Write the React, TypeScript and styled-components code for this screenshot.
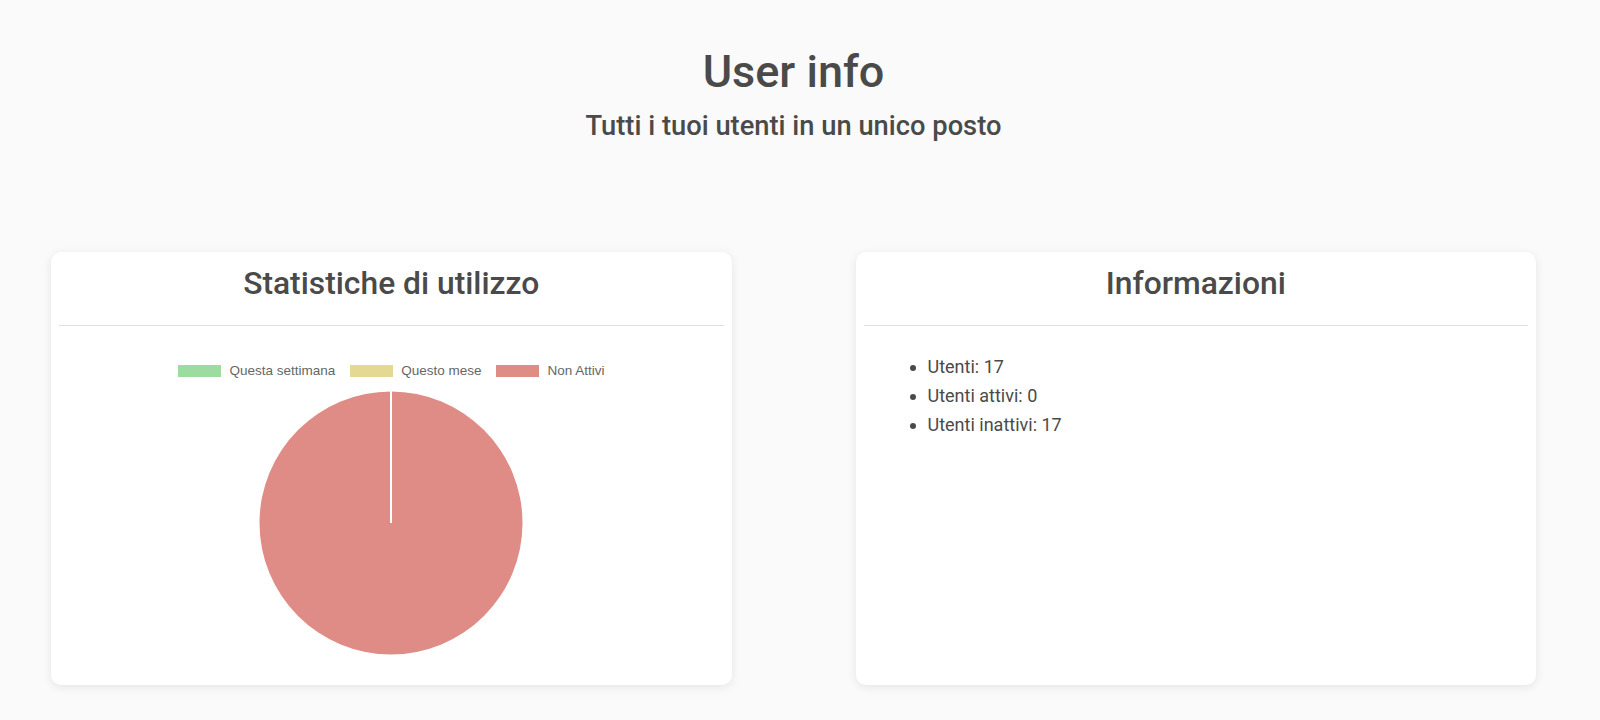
import React from "react";
import styled, { createGlobalStyle } from "styled-components";

const COLORS = {
  page: "#fafafa",
  text: "#4a4a4a",
  legendText: "#666666",
  divider: "#e0e0e0",
  green: "#9ddca0",
  yellow: "#e4d993",
  red: "#e08c86",
};

const GlobalStyle = createGlobalStyle`
  html, body {
    margin: 0;
    padding: 0;
    background-color: ${COLORS.page};
    font-family: Roboto, "Liberation Sans", Arial, sans-serif;
    color: ${COLORS.text};
  }
  * {
    box-sizing: border-box;
  }
`;

const S = {
  // the reference leaves a 13px gutter on the right (scrollbar lane)
  Page: styled.div`
    min-height: 720px;
    display: flex;
    flex-direction: column;
    padding-right: 13px;
  `,
  Header: styled.header`
    display: flex;
    flex-direction: column;
    align-items: center;
    padding-top: 45px;
  `,
  Title: styled.h1`
    margin: 0;
    font-size: 45px;
    line-height: 1.2;
    font-weight: 500;
  `,
  Subtitle: styled.h2`
    margin: 11px 0 0;
    font-size: 27.3px;
    line-height: 1.2;
    font-weight: 500;
  `,
  Grid: styled.main`
    display: grid;
    grid-template-columns: 1fr 1fr;
    column-gap: 124px;
    padding: 109px 51px 0;
  `,
  Card: styled.section`
    display: flex;
    flex-direction: column;
    height: 433px;
    padding: 8px;
    background-color: #ffffff;
    border-radius: 10px;
    box-shadow: 0 2px 10px rgba(0, 0, 0, 0.09);
  `,
  CardHeader: styled.div`
    padding: 4px 0 23px;
    border-bottom: 1px solid ${COLORS.divider};
    text-align: center;
  `,
  CardTitle: styled.h3`
    margin: 0;
    font-size: 31.8px;
    line-height: 1.2;
    font-weight: 500;
  `,
  ChartBody: styled.div`
    display: flex;
    flex-direction: column;
    align-items: center;
    padding-top: 37px;
  `,
  Legend: styled.ul`
    display: flex;
    gap: 14.5px;
    margin: 0;
    padding: 0;
    list-style: none;
    height: 16px;
    align-items: center;
  `,
  LegendItem: styled.li`
    display: flex;
    align-items: center;
    gap: 8.5px;
    font-family: "Liberation Sans", Arial, sans-serif;
    font-size: 13.5px;
    color: ${COLORS.legendText};
  `,
  Swatch: styled.span<{ $color: string }>`
    width: 43px;
    height: 12px;
    background-color: ${(p) => p.$color};
  `,
  PieWrap: styled.div`
    margin-top: 12px;
    width: 264px;
    height: 264px;
  `,
  InfoBody: styled.div`
    padding: 26px 24px;
  `,
  InfoList: styled.ul`
    margin: 0;
    padding-left: 40px;
    font-size: 18px;
    line-height: 29px;
  `,
};

const legend = [
  { label: "Questa settimana", color: COLORS.green },
  { label: "Questo mese", color: COLORS.yellow },
  { label: "Non Attivi", color: COLORS.red },
];

const PieChart = () => (
  <svg width="264" height="264" viewBox="0 0 264 264">
    <circle cx="132" cy="132" r="131.5" fill={COLORS.red} />
    <line x1="132" y1="132" x2="132" y2="0" stroke="#ffffff" strokeWidth="2" />
  </svg>
);

const App = () => {
  return (
    <S.Page>
      <GlobalStyle />
      <S.Header>
        <S.Title>User info</S.Title>
        <S.Subtitle>Tutti i tuoi utenti in un unico posto</S.Subtitle>
      </S.Header>
      <S.Grid>
        <S.Card>
          <S.CardHeader>
            <S.CardTitle>Statistiche di utilizzo</S.CardTitle>
          </S.CardHeader>
          <S.ChartBody>
            <S.Legend>
              {legend.map((item) => (
                <S.LegendItem key={item.label}>
                  <S.Swatch $color={item.color} />
                  {item.label}
                </S.LegendItem>
              ))}
            </S.Legend>
            <S.PieWrap>
              <PieChart />
            </S.PieWrap>
          </S.ChartBody>
        </S.Card>
        <S.Card>
          <S.CardHeader>
            <S.CardTitle>Informazioni</S.CardTitle>
          </S.CardHeader>
          <S.InfoBody>
            <S.InfoList>
              <li>Utenti: 17</li>
              <li>Utenti attivi: 0</li>
              <li>Utenti inattivi: 17</li>
            </S.InfoList>
          </S.InfoBody>
        </S.Card>
      </S.Grid>
    </S.Page>
  );
};

export default App;
